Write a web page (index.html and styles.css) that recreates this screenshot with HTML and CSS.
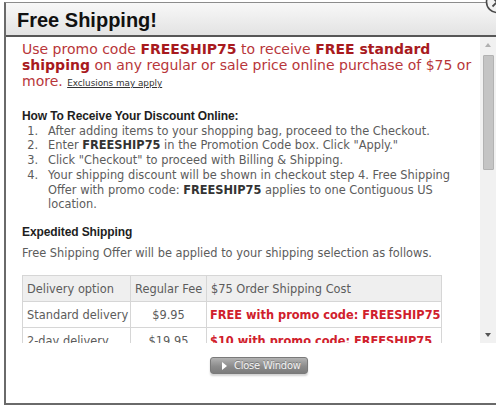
FILE: index.html
```html
<!DOCTYPE html>
<html>
<head>
<meta charset="utf-8">
<link rel="stylesheet" href="styles.css">
</head>
<body>
<div class="frame">
  <div class="titlebar">
    <h1 class="title">Free Shipping!</h1>
  </div>
  <div class="main">
    <div class="scroll">
      <p class="promo">Use promo code <b>FREESHIP75</b> to receive <b>FREE standard shipping</b> on any regular or sale price online purchase of $75 or more. <a class="excl">Exclusions may apply</a></p>
      <h2 class="heading first">How To Receive Your Discount Online:</h2>
      <ol class="steps">
        <li><span>After adding items to your shopping bag, proceed to the Checkout.</span></li>
        <li><span>Enter <b>FREESHIP75</b> in the Promotion Code box. Click "Apply."</span></li>
        <li><span>Click "Checkout" to proceed with Billing &amp; Shipping.</span></li>
        <li><span>Your shipping discount will be shown in checkout step 4. Free Shipping Offer with promo code: <b>FREESHIP75</b> applies to one Contiguous US location.</span></li>
      </ol>
      <h2 class="heading second">Expedited Shipping</h2>
      <p class="note">Free Shipping Offer will be applied to your shipping selection as follows.</p>
      <table class="rates">
        <colgroup><col class="c1"><col class="c2"><col class="c3"></colgroup>
        <tr class="head"><td>Delivery option</td><td>Regular Fee</td><td>$75 Order Shipping Cost</td></tr>
        <tr><td>Standard delivery</td><td class="fee">$9.95</td><td class="deal">FREE with promo code: FREESHIP75</td></tr>
        <tr><td>2-day delivery</td><td class="fee">$19.95</td><td class="deal">$10 with promo code: FREESHIP75</td></tr>
        <tr><td>Overnight delivery</td><td class="fee">$29.95</td><td class="deal">$20 with promo code: FREESHIP75</td></tr>
      </table>
    </div>
    <div class="scrollbar">
      <div class="sb-btn"><span class="arrow up"></span></div>
      <div class="sb-track"><div class="sb-thumb"></div></div>
      <div class="sb-btn"><span class="arrow down"></span></div>
    </div>
  </div>
  <div class="footer">
    <div class="btn"><span class="play"></span><span class="btn-label">Close Window</span></div>
  </div>
</div>
<svg class="close" width="24" height="24" viewBox="0 0 24 24">
  <circle cx="12" cy="12" r="10.5" fill="#f2f2f2" stroke="#4a4a4a" stroke-width="1.6"/>
  <path d="M7.5 7.5 L16.5 16.5 M16.5 7.5 L7.5 16.5" stroke="#4a4a4a" stroke-width="1.8" fill="none"/>
</svg>
</body>
</html>
```
FILE: styles.css
```css
html, body {
  margin: 0;
  padding: 0;
}
body {
  width: 496px;
  height: 412px;
  overflow: hidden;
  background: #ffffff;
  position: relative;
  font-family: "DejaVu Sans", Verdana, sans-serif;
}
.frame {
  margin: 2px 0 0 4px;
  width: 510px;
  height: 403px;
  box-sizing: border-box;
  border-top: 1px solid #8c8c8c;
  border-left: 2px solid #6a6a6a;
  border-bottom: 2px solid #6a6a6a;
  display: flex;
  flex-direction: column;
  background: #fff;
}
.titlebar {
  height: 32px;
  flex: none;
  background: linear-gradient(#f8f8f8, #e3e3e3);
  border-bottom: 2px solid #575757;
  display: flex;
  align-items: center;
}
.title {
  margin: 0 0 0 11px;
  font-family: "Liberation Sans", Arial, sans-serif;
  font-weight: bold;
  font-size: 20px;
  line-height: 24px;
  color: #111;
  padding-top: 2px;
}
.main {
  display: flex;
  height: 306px;
  flex: none;
  width: 490px;
}
.scroll {
  flex: 1;
  overflow: hidden;
  padding: 4px 0 0 16px;
}
.promo {
  margin: 0;
  width: 452px;
  font-size: 14px;
  line-height: 16px;
  color: #b8363a;
}
.promo b {
  color: #a81a1e;
}
.excl {
  font-size: 8.8px;
  color: #333;
  text-decoration: underline;
}
.heading {
  margin: 0;
  font-family: "Liberation Sans", Arial, sans-serif;
  font-size: 12px;
  font-weight: bold;
  line-height: 15px;
  color: #1e1e1e;
  letter-spacing: -0.1px;
}
.heading.first {
  margin-top: 17.5px;
}
.heading.second {
  margin-top: 13px;
}
.steps {
  margin: 0;
  padding: 0;
  list-style: none;
  counter-reset: step;
  width: 450px;
  font-size: 11.4px;
  line-height: 14.8px;
  color: #5c5c5c;
}
.steps li {
  counter-increment: step;
  display: grid;
  grid-template-columns: 26px 1fr;
}
.steps li::before {
  content: counter(step) ".";
  text-align: right;
  padding-right: 10px;
}
.steps b {
  color: #333;
}
.note {
  margin: 6px 0 0;
  font-size: 11.4px;
  line-height: 14.8px;
  color: #5c5c5c;
}
.rates {
  margin-top: 14px;
  border-collapse: collapse;
  table-layout: fixed;
  width: 420px;
  font-size: 11.4px;
  color: #5c5c5c;
}
.rates col.c1 { width: 108px; }
.rates col.c2 { width: 76px; }
.rates td {
  border: 1px solid #d6d6d6;
  height: 25px;
  padding: 0 3px 0 4px;
  white-space: nowrap;
  overflow: hidden;
  vertical-align: middle;
}
.rates .head td {
  background: #efefef;
}
.rates .fee {
  text-align: center;
  padding: 0;
}
.rates .deal {
  color: #d0202c;
  font-weight: bold;
  padding-left: 3px;
}
.scrollbar {
  width: 16px;
  flex: none;
  background: #f1f1f1;
  display: flex;
  flex-direction: column;
}
.sb-btn {
  height: 16px;
  display: flex;
  align-items: center;
  justify-content: center;
}
.sb-track {
  flex: 1;
  padding: 2px 2px 0 3px;
}
.sb-thumb {
  height: 113px;
  background: #c4c4c4;
  border: 1px solid #b2b2b2;
  border-radius: 1px;
}
.arrow {
  width: 0;
  height: 0;
  border-left: 3.5px solid transparent;
  border-right: 3.5px solid transparent;
}
.arrow.up {
  border-bottom: 4px solid #b0b0b0;
}
.arrow.down {
  border-top: 4px solid #555;
}
.footer {
  flex: 1;
  padding: 14px 0 0 204px;
}
.btn {
  width: 98px;
  height: 17px;
  box-sizing: border-box;
  border: 1px solid #7a7a7a;
  border-radius: 3px;
  background: linear-gradient(#b3b3b3, #8c8c8c 55%, #7c7c7c);
  box-shadow: 0 2px 2px rgba(0, 0, 0, 0.18);
  display: flex;
  align-items: center;
  padding-left: 11px;
}
.play {
  flex: none;
  width: 0;
  height: 0;
  border-top: 4px solid transparent;
  border-bottom: 4px solid transparent;
  border-left: 5px solid #fff;
  margin-right: 7px;
}
.btn-label {
  font-family: "DejaVu Sans", sans-serif;
  font-stretch: condensed;
  font-size: 11px;
  line-height: 14px;
  white-space: nowrap;
  letter-spacing: -0.2px;
  color: #f4f4f4;
  text-shadow: 0 -1px 0 rgba(0, 0, 0, 0.25);
}
.close {
  position: absolute;
  left: 485px;
  top: -10px;
}
```
